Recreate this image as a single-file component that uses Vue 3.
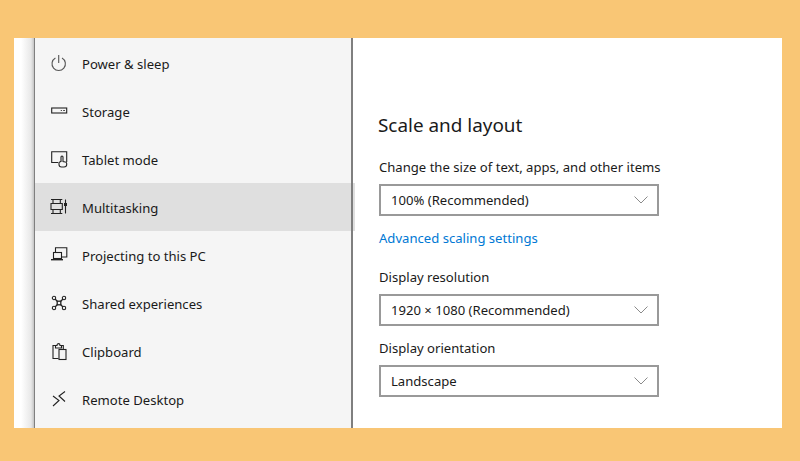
<script setup>
const items = [
  { label: 'Power & sleep', icon: 'power' },
  { label: 'Storage', icon: 'storage' },
  { label: 'Tablet mode', icon: 'tablet' },
  { label: 'Multitasking', icon: 'multi', active: true },
  { label: 'Projecting to this PC', icon: 'project' },
  { label: 'Shared experiences', icon: 'shared' },
  { label: 'Clipboard', icon: 'clip' },
  { label: 'Remote Desktop', icon: 'remote' }
]
</script>

<template>
  <div class="page">
    <div class="window">
      <div class="gutter"></div>
      <nav class="sidebar">
        <div v-for="item in items" :key="item.label" class="row" :class="{ active: item.active }">
          <svg class="icon" width="18" height="18" viewBox="0 0 18 18" fill="none" stroke="#222" stroke-width="1.100">
            <template v-if="item.icon === 'power'">
              <path d="M8.700 0V8" stroke="#555" />
              <path d="M5.400 3a6.700 6.700 0 1 0 6.600 0" stroke="#555" />
            </template>
            <template v-else-if="item.icon === 'storage'">
              <rect x="1.700" y="5" width="15" height="5" />
              <path d="M10.800 7.500h1M13.300 7.500h1.500" />
            </template>
            <template v-else-if="item.icon === 'tablet'">
              <path d="M8 11.500H1.700V.700H16.700V11" />
              <path d="M11 11V6c0-1.300 2-1.300 2 0v4.500l2.300.5c1 .2 1.400.8 1.400 1.500v1c0 1.500-1.200 2.500-2.700 2.500h-2.500c-1.500 0-2.500-1-2.500-2.500v-2l2-1.200z" fill="#f5f5f5" />
            </template>
            <template v-else-if="item.icon === 'multi'">
              <path d="M1 .500H12.300M3 .500V4.500M10.300 .500V4.500M1 4.500H12.300V10.500H1zM3 10.500V14.500M10.300 10.500V14.500M1 14.500H12.300" />
              <path d="M15.500 .500V14.500" />
              <rect x="14" y="4" width="3" height="3" fill="#222" stroke="none" />
            </template>
            <template v-else-if="item.icon === 'project'">
              <path d="M5.500 5.500V.800H16.800V10H11.500" />
              <rect x="3.500" y="5.500" width="8" height="6" />
              <path d="M1 12.700H13" stroke-width="1.400" />
            </template>
            <template v-else-if="item.icon === 'shared'">
              <path d="M5 4L7.500 6.500M13 4L10.500 6.500M5 12L7.500 9.500M13 12L10.500 9.500" stroke-width="1.300" />
              <circle cx="4" cy="3" r="1.700" />
              <circle cx="14" cy="3" r="1.700" />
              <circle cx="4" cy="13" r="1.700" />
              <circle cx="14" cy="13" r="1.700" />
              <rect x="7.200" y="6.200" width="3.600" height="3.600" stroke-width="1.300" />
            </template>
            <template v-else-if="item.icon === 'clip'">
              <path d="M8.500 15.500H3V2.500H5.500M11.500 2.500H13.300V6" />
              <path d="M5.500 5V2.500H7C7 0 10 0 10 2.500h1.500V5z" />
              <rect x="9" y="6.500" width="7" height="10" />
            </template>
            <template v-else>
              <path d="M3 5L9 9.500L3 15" />
              <path d="M15 .500L9 5L15 10.500" />
            </template>
          </svg>
          <span class="label">{{ item.label }}</span>
        </div>
      </nav>
      <main class="content">
        <h2 class="title">Scale and layout</h2>
        <label class="caption first">Change the size of text, apps, and other items</label>
        <div class="select">
          <span>100% (Recommended)</span>
          <svg width="14" height="8" viewBox="0 0 14 8" fill="none" stroke="#8a8a8a"><path d="M.5.5L7 7L13.500.5" /></svg>
        </div>
        <a class="link">Advanced scaling settings</a>
        <label class="caption res">Display resolution</label>
        <div class="select">
          <span>1920 × 1080 (Recommended)</span>
          <svg width="14" height="8" viewBox="0 0 14 8" fill="none" stroke="#8a8a8a"><path d="M.5.5L7 7L13.500.5" /></svg>
        </div>
        <label class="caption ori">Display orientation</label>
        <div class="select">
          <span>Landscape</span>
          <svg width="14" height="8" viewBox="0 0 14 8" fill="none" stroke="#8a8a8a"><path d="M.5.5L7 7L13.500.5" /></svg>
        </div>
      </main>
    </div>
  </div>
</template>

<style>
html, body { margin: 0; background: #f9c675; }
</style>

<style scoped>
.page {
  width: 800px;
  height: 461px;
  padding: 38px 18px 33px 14px;
  box-sizing: border-box;
  background: #f9c675;
  font-family: "Noto Sans", "Open Sans", sans-serif;
  color: #1a1a1a;
}
.window {
  display: flex;
  height: 100%;
  background: #fff;
  overflow: hidden;
}
.gutter {
  width: 20px;
  flex: none;
  background: linear-gradient(to right, #fff 0, #fff 35%, #e8e8e8 85%, #c4c4c4 100%);
}
.sidebar {
  width: 316px;
  flex: none;
  padding-top: 1px;
  background: #f5f5f5;
  border-left: 1px solid #7f7f7f;
  position: relative;
}
.sidebar::after {
  content: "";
  position: absolute;
  top: 0;
  bottom: 0;
  left: 316px;
  width: 2px;
  background: #7f7f7f;
}
.row {
  display: flex;
  align-items: center;
  height: 48px;
  box-sizing: border-box;
  padding: 2px 0 0 15px;
  font-size: 13.1px;
}
.row.active { width: 320px; background: #dfdfdf; }
.icon { flex: none; margin-right: 14px; }
.label { white-space: nowrap; }
.content {
  flex: 1;
  padding: 74px 0 0 28px;
}
.title {
  margin: 0 0 0 -1px;
  font-size: 18.9px;
  line-height: 26px;
  font-weight: 400;
}
.caption {
  display: block;
  font-size: 13.1px;
  line-height: 18px;
}
.first { margin-top: 20px; margin-bottom: 8px; }
.res { margin-top: 21px; margin-bottom: 8px; }
.ori { margin-top: 13px; margin-bottom: 8px; }
.select {
  width: 280px;
  height: 32px;
  box-sizing: border-box;
  border: 2px solid #999;
  display: flex;
  align-items: center;
  justify-content: space-between;
  padding: 0 9px 0 10px;
  font-size: 13.1px;
  background: #fff;
}
.link {
  display: block;
  margin-top: 13px;
  font-size: 13.1px;
  line-height: 18px;
  color: #0078d4;
}
</style>
